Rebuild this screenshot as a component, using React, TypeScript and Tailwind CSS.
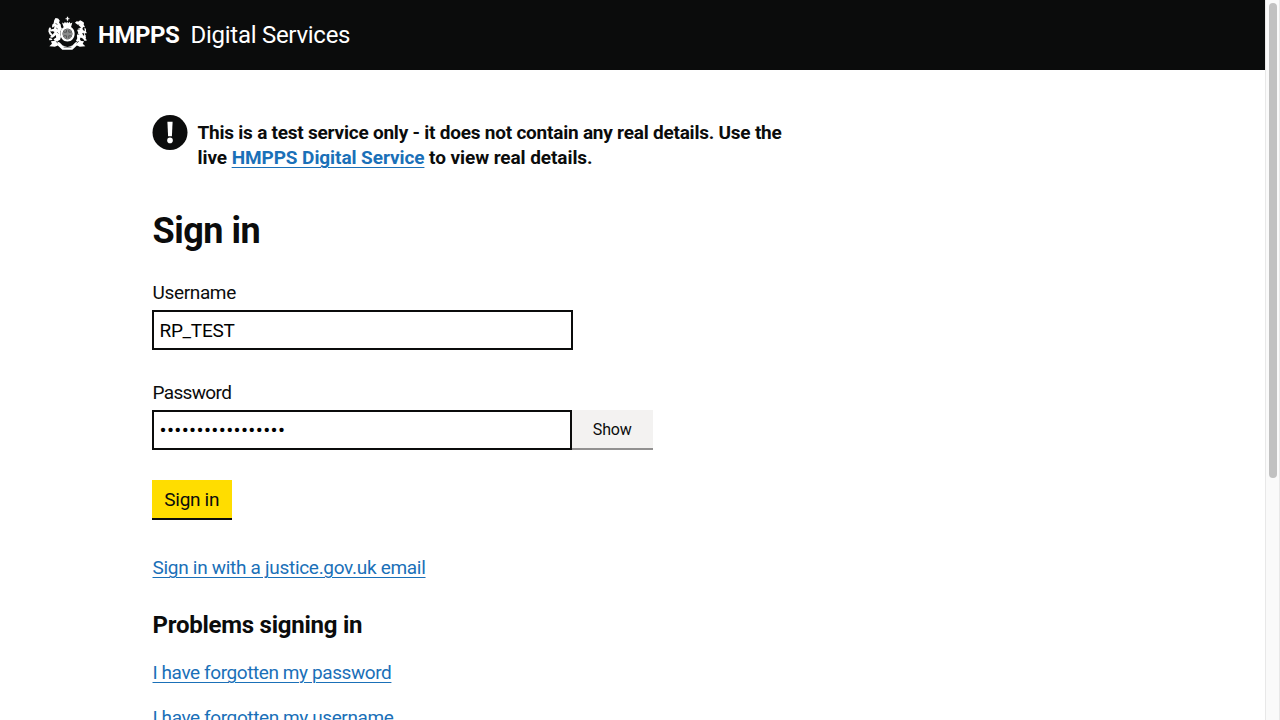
import type { ReactNode } from "react";

function Crest() {
  return (
    <svg className="h-[35px] w-[39px] shrink-0" viewBox="22 22 120 108" fill="#fff" aria-hidden="true">
      <path d="M80 24h4v5h4v3h-4v5h-4v-5h-4v-3h4z" />
      <path d="M65 42l6 3 3-5 4 4 3-5 3 5 4-4 3 5 6-3-4 14H70z" />
      <path
        fillRule="evenodd"
        d="M82 54c14 0 22 10 22 23s-9 24-22 24-22-11-22-24 8-23 22-23zm0 7c-9 0-15 7-15 16s6 17 15 17 15-8 15-17-6-16-15-16z"
      />
      <ellipse cx="82" cy="77.500" rx="14.500" ry="16.500" fill="#8a8b8b" />
      <path d="M71 72h8v-7M86 65v7h8M71 83h8v8M86 91v-8h8" stroke="#555656" strokeWidth="3" fill="none" />
      <path d="M41 35l4-7 8 2 5 6-2 7 5 5 1 8 3 5-5 8-1 9 3 8-3 9-8 5-8-1-4-5 8-6-1-7-5 4-6 4-6-1 1-5 7-5 5-7-5-2-7 1-3-5 6-2 7-2 2-7-5 1-3-5 5-5z" />
      <path d="M24 61l4-5 4 6-4 5 3 7 5 5-2 4-7-4-4-9zM25 91h7l4 5-10 1zM34 54l4-3 2 4-4 3z" />
      <path d="M105 43l5-5 6 1 5-4 6 3 6 5-1 6 4 6-6 2-2 5 5 6 8 3-1 5-8-2-5 2 5 7 7 4-1 6 5 4-8 2-5-7-7-4-3 5 5 9-8 1-9-4 4-8-1-9 4-8-3-8 5-7 7-1-6-6z" />
      <path d="M134 57l5 5v8l-4 7 4 7-4 6-5-3 4-6-3-7 4-7z" />
      <path d="M31 100l13-2 14 6 9 9 15 5 15-5 9-9 14-6 13 2-4 8 8 7-17 2-9-4-14 13H66l-14-13-9 4-17-2 8-7z" />
      <path
        d="M46 100l7 6M117 100l-7 6M70 118h24"
        stroke="#0b0c0c"
        strokeWidth="2"
        fill="none"
      />
      <path
        d="M45 45l6 3M47 59l5 3M50 72l4 4M118 49l-6 3M114 63l6-1M112 77l6 2"
        stroke="#0b0c0c"
        strokeWidth="2"
        fill="none"
      />
    </svg>
  );
}

function Link({ children }: { children: ReactNode }) {
  return (
    <a href="#" className="text-[#1a70b8] underline decoration-1 underline-offset-[3px]">
      {children}
    </a>
  );
}

export default function App() {
  return (
    <div className="flex h-[720px] w-[1280px] overflow-hidden bg-white font-['Roboto',sans-serif] text-[19px] leading-[25px] text-[#0b0c0c]">
      <div className="flex h-full w-[1265px] flex-col">
        <header className="flex h-[70px] shrink-0 items-center bg-[#0b0c0c] pl-12 text-2xl leading-[30px] text-white">
          <div className="pb-1">
            <Crest />
          </div>
          <span className="ml-[11px] w-[92.5px] font-bold tracking-[-0.5px]">HMPPS</span>
          <span className="tracking-[-0.27px]">Digital Services</span>
        </header>

        <main className="pt-[45px] pl-[152.5px]">
          <div className="-ml-[0.5px] flex h-[55px] font-bold">
            <svg className="h-[35px] w-9 shrink-0" viewBox="0 0 36 35" aria-hidden="true">
              <circle cx="18" cy="17.500" r="17.500" fill="#0b0c0c" />
              <path d="M15.400 6.700h5.200l-.7 14.600h-3.800z" fill="#fff" />
              <circle cx="18" cy="25.400" r="2.800" fill="#fff" />
            </svg>
            <p className="ml-[9.5px] pt-[5px] whitespace-nowrap">
              <span className="tracking-[-0.225px]">
                This is a test service only - it does not contain any real details. Use the
              </span>
              <br />
              <span className="tracking-[-0.08px]">
                live <Link>HMPPS Digital Service</Link> to view real details.
              </span>
            </p>
          </div>

          <h1 className="mt-[41px] text-4xl leading-10 font-bold tracking-[-0.5px]">Sign in</h1>

          <form>
            <label className="mt-[29px] block tracking-[-0.35px]" htmlFor="username">
              Username
            </label>
            <input
              id="username"
              className="mt-[5px] -ml-[0.5px] block h-10 w-[420.5px] border-2 border-[#0b0c0c] px-[5.5px] tracking-[-0.3px] text-black"
              defaultValue="RP_TEST"
            />
            <label className="mt-[30px] block tracking-[-0.65px]" htmlFor="password">
              Password
            </label>
            <div className="mt-[5px] -ml-[0.5px] flex">
              <input
                id="password"
                type="password"
                className="h-10 w-[420px] border-2 border-[#0b0c0c] px-[5.5px] text-[21px] tracking-[0.32px] text-black"
                defaultValue="abcdefghijklmnopq"
              />
              <button
                type="button"
                className="h-[38px] w-[80.5px] bg-[#f3f2f1] pt-0.5 text-base tracking-[-0.15px] shadow-[0_2px_0_#929191]"
              >
                Show
              </button>
            </div>
            <button
              type="button"
              className="mt-[30px] -ml-[0.5px] block h-[38px] w-[79.5px] bg-[#ffdd00] tracking-[-0.3px] shadow-[0_2px_0_#0b0c0c]"
            >
              Sign in
            </button>
          </form>

          <p className="mt-[37px] tracking-[-0.295px]">
            <Link>Sign in with a justice.gov.uk email</Link>
          </p>
          <h2 className="mt-[30px] text-2xl leading-[30px] font-bold tracking-[-0.25px]">Problems signing in</h2>
          <p className="mt-5 tracking-[-0.41px]">
            <Link>I have forgotten my password</Link>
          </p>
          <p className="mt-5 tracking-[-0.4px]">
            <Link>I have forgotten my username</Link>
          </p>
        </main>
      </div>

      <div className="h-full w-[15px] border-x border-[#e8e8e8] bg-[#fafafa] pt-[3px] pl-[3px]">
        <div className="h-[475px] w-2 rounded-full bg-[#c1c1c1]" />
      </div>
    </div>
  );
}
